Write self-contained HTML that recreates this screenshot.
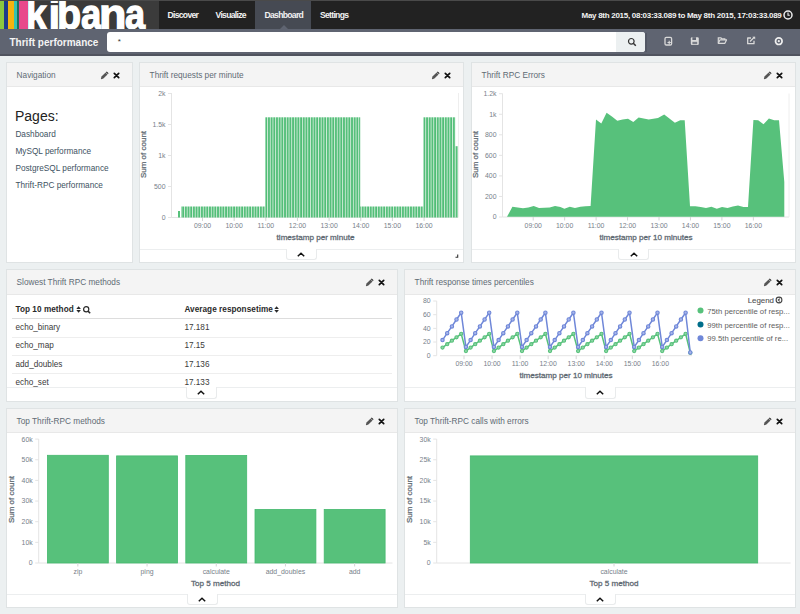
<!DOCTYPE html>
<html><head><meta charset="utf-8"><style>
*{margin:0;padding:0;box-sizing:border-box}
html,body{width:800px;height:614px;overflow:hidden;background:#ecf0f1;font-family:"Liberation Sans", sans-serif;}
.a{position:absolute}
.nav{left:0;top:0;width:800px;height:29px;background:#222;}
.navtxt{color:#f2f2f2;font-weight:bold;font-size:8.6px;letter-spacing:-0.7px;top:11px;line-height:9px;white-space:nowrap}
.sub{left:0;top:29px;width:800px;height:27px;background:#5f6471;border-bottom:2px solid #50545f}
.panel{background:#fff;border:1px solid #dfe3e4;}
.ph{position:absolute;left:0;top:0;right:0;height:24px;background:#f4f4f4;border-bottom:1px solid #e8e8e8}
.pt{position:absolute;left:9.6px;top:7.7px;font-size:8.25px;color:#5f6b75;white-space:nowrap;line-height:10px}
.ico{position:absolute;top:9px}
.exp{position:absolute;left:0;right:0;bottom:0;height:13px;border-top:1px solid #eef0f1}
.tab{position:absolute;bottom:0;width:31px;height:13px;background:#fff;border:1px solid #eceeef;border-top:none;border-radius:0 0 4px 4px;top:-1px}
</style></head><body>
<div class="a nav"></div>
<div class="a" style="left:0;top:0;width:800px;height:1px;background:#4a4a4a"></div>
<div class="a" style="left:0px;top:1px;width:4px;height:28px;background:#8cc63f"></div>
<div class="a" style="left:4px;top:1px;width:3.5px;height:28px;background:#1d3a8a"></div>
<div class="a" style="left:7.5px;top:1px;width:0.5px;height:28px;background:#1a1a3a"></div>
<div class="a" style="left:8px;top:1px;width:5.5px;height:28px;background:#f5b30f"></div>
<div class="a" style="left:13.5px;top:1px;width:3.5px;height:28px;background:#35c3b1"></div>
<div class="a" style="left:17px;top:1px;width:2px;height:28px;background:#1d6e5d"></div>
<div class="a" style="left:19px;top:1px;width:9px;height:28px;background:#e8488b"></div>
<div class="a" style="left:28px;top:1px;width:131px;height:28px;background:#3b3b3b;overflow:hidden"><div class="a" style="left:-2.2px;top:-16.4px;font-size:42px;font-weight:bold;color:#fff;line-height:60px;transform:scaleX(0.89);transform-origin:0 0;-webkit-text-stroke:1.3px #fff;text-shadow:0 0 0.8px #000,0 0 0.8px #000">k</div><div class="a" style="left:20.5px;top:-16.4px;font-size:42px;font-weight:bold;color:#fff;line-height:60px;transform:scaleX(1.0);transform-origin:0 0;-webkit-text-stroke:1.3px #fff;text-shadow:0 0 0.8px #000,0 0 0.8px #000">i</div><div class="a" style="left:28.7px;top:-16.4px;font-size:42px;font-weight:bold;color:#fff;line-height:60px;transform:scaleX(0.94);transform-origin:0 0;-webkit-text-stroke:1.3px #fff;text-shadow:0 0 0.8px #000,0 0 0.8px #000">b</div><div class="a" style="left:53.2px;top:-16.4px;font-size:42px;font-weight:bold;color:#fff;line-height:60px;transform:scaleX(0.87);transform-origin:0 0;-webkit-text-stroke:1.3px #fff;text-shadow:0 0 0.8px #000,0 0 0.8px #000">a</div><div class="a" style="left:71.2px;top:-16.4px;font-size:42px;font-weight:bold;color:#fff;line-height:60px;transform:scaleX(1.07);transform-origin:0 0;-webkit-text-stroke:1.3px #fff;text-shadow:0 0 0.8px #000,0 0 0.8px #000">n</div><div class="a" style="left:97.0px;top:-16.4px;font-size:42px;font-weight:bold;color:#fff;line-height:60px;transform:scaleX(0.86);transform-origin:0 0;-webkit-text-stroke:1.3px #fff;text-shadow:0 0 0.8px #000,0 0 0.8px #000">a</div></div>
<div class="a" style="left:255px;top:1px;width:56px;height:28px;background:#464a53"></div>
<div class="a" style="left:279.5px;top:25px;width:0;height:0;border-left:4px solid transparent;border-right:4px solid transparent;border-bottom:4px solid #5f6471"></div>
<div class="a navtxt" style="left:167.5px">Discover</div>
<div class="a navtxt" style="left:215.5px">Visualize</div>
<div class="a navtxt" style="left:264.5px">Dashboard</div>
<div class="a navtxt" style="left:320px">Settings</div>
<div class="a navtxt" style="left:581.5px;letter-spacing:-0.28px;font-size:8px">May 8th 2015, 08:03:33.089 to May 8th 2015, 17:03:33.089</div>
<svg class="a" style="left:783px;top:9.5px" width="10" height="10" viewBox="0 0 10 10"><circle cx="5" cy="5" r="4" fill="none" stroke="#eee" stroke-width="1.5"/><path d="M5 2.5V5.2H6.8" fill="none" stroke="#eee" stroke-width="1.1"/></svg>
<div class="a sub"></div>
<div class="a" style="left:9.5px;top:37px;font-size:10px;font-weight:bold;color:#f4f4f4;line-height:12px;white-space:nowrap">Thrift performance</div>
<div class="a" style="left:107px;top:32px;width:538px;height:20px;background:#fff;border-radius:3px;overflow:hidden"><div class="a" style="left:509px;top:0;width:29px;height:20px;background:#ecf0f1"></div><div class="a" style="left:10.8px;top:5px;font-size:8px;color:#333;line-height:9px">*</div><svg class="a" style="left:520px;top:5px" width="10" height="10" viewBox="0 0 10 10"><circle cx="4.3" cy="4.3" r="2.8" fill="none" stroke="#333" stroke-width="1.2"/><path d="M6.3 6.3L8.8 8.8" stroke="#333" stroke-width="1.5"/></svg></div>
<div class="a" style="left:645px;top:33px;width:1.5px;height:19px;background:#535865"></div>
<svg class="a" style="left:0;top:0" width="800" height="60" viewBox="0 0 800 60"><rect x="665" y="37.4" width="6.6" height="7.6" rx="1.3" fill="none" stroke="#d9d9d9" stroke-width="1.3"/><path d="M669.2 40.8v3.4M667.5 42.5h3.4" stroke="#d9d9d9" stroke-width="1.1"/><rect x="690.8" y="37.2" width="8" height="7.8" rx="1.2" fill="#d9d9d9"/><rect x="692.4" y="37.2" width="3.6" height="2.8" fill="#5f6471"/><rect x="692.4" y="41.8" width="4.8" height="2.4" fill="#5f6471" opacity="0.8"/><path d="M718.3 43.2v-5.3h2.7l0.8 0.9h3v1.2" fill="none" stroke="#d9d9d9" stroke-width="1.2"/><path d="M718.3 43.3h6.6l1.6-3.4h-6.6z" fill="none" stroke="#d9d9d9" stroke-width="1.2" stroke-linejoin="round"/><path d="M751 38h-3.3v5.7h6.3v-3" fill="none" stroke="#d9d9d9" stroke-width="1.3" stroke-linejoin="round"/><path d="M750 41.5l4.5-4.5" stroke="#d9d9d9" stroke-width="1.3"/><path d="M752.3 36.7h2.9v2.9z" fill="#d9d9d9"/><circle cx="778.8" cy="41.2" r="3.3" fill="none" stroke="#efefef" stroke-width="1.7"/><circle cx="778.8" cy="41.2" r="1.1" fill="#efefef"/></svg>
<div class="a panel" style="left:6px;top:62px;width:127px;height:201px">
<div class="ph" style="height:24px"><div class="pt">Navigation</div><svg class="ico" style="left:93px;top:8px" width="9" height="9" viewBox="0 0 9 9"><path d="M1.4 8.2L0.9 7.7L1.5 5.6L5.6 1.5L7.5 3.4L3.4 7.5z" fill="#555"/><path d="M5.9 1.2L6.7 0.4L8.6 2.3L7.8 3.1z" fill="#222"/></svg><svg class="ico" style="left:106px;top:8.5px" width="7" height="7" viewBox="0 0 7 7"><path d="M1.3 1.3L5.7 5.7M5.7 1.3L1.3 5.7" stroke="#111" stroke-width="1.7" stroke-linecap="round"/></svg></div>
</div>
<div class="a panel" style="left:139px;top:62px;width:325px;height:201px">
<div class="ph" style="height:24px"><div class="pt">Thrift requests per minute</div><svg class="ico" style="left:291px;top:8px" width="9" height="9" viewBox="0 0 9 9"><path d="M1.4 8.2L0.9 7.7L1.5 5.6L5.6 1.5L7.5 3.4L3.4 7.5z" fill="#555"/><path d="M5.9 1.2L6.7 0.4L8.6 2.3L7.8 3.1z" fill="#222"/></svg><svg class="ico" style="left:304px;top:8.5px" width="7" height="7" viewBox="0 0 7 7"><path d="M1.3 1.3L5.7 5.7M5.7 1.3L1.3 5.7" stroke="#111" stroke-width="1.7" stroke-linecap="round"/></svg></div>
</div>
<div class="a panel" style="left:471px;top:62px;width:325px;height:201px">
<div class="ph" style="height:24px"><div class="pt">Thrift RPC Errors</div><svg class="ico" style="left:291px;top:8px" width="9" height="9" viewBox="0 0 9 9"><path d="M1.4 8.2L0.9 7.7L1.5 5.6L5.6 1.5L7.5 3.4L3.4 7.5z" fill="#555"/><path d="M5.9 1.2L6.7 0.4L8.6 2.3L7.8 3.1z" fill="#222"/></svg><svg class="ico" style="left:304px;top:8.5px" width="7" height="7" viewBox="0 0 7 7"><path d="M1.3 1.3L5.7 5.7M5.7 1.3L1.3 5.7" stroke="#111" stroke-width="1.7" stroke-linecap="round"/></svg></div>
</div>
<div class="a panel" style="left:6px;top:269px;width:392px;height:133px">
<div class="ph" style="height:25px"><div class="pt">Slowest Thrift RPC methods</div><svg class="ico" style="left:358px;top:8px" width="9" height="9" viewBox="0 0 9 9"><path d="M1.4 8.2L0.9 7.7L1.5 5.6L5.6 1.5L7.5 3.4L3.4 7.5z" fill="#555"/><path d="M5.9 1.2L6.7 0.4L8.6 2.3L7.8 3.1z" fill="#222"/></svg><svg class="ico" style="left:371px;top:8.5px" width="7" height="7" viewBox="0 0 7 7"><path d="M1.3 1.3L5.7 5.7M5.7 1.3L1.3 5.7" stroke="#111" stroke-width="1.7" stroke-linecap="round"/></svg></div>
</div>
<div class="a panel" style="left:404px;top:269px;width:392px;height:133px">
<div class="ph" style="height:25px"><div class="pt">Thrift response times percentiles</div><svg class="ico" style="left:358px;top:8px" width="9" height="9" viewBox="0 0 9 9"><path d="M1.4 8.2L0.9 7.7L1.5 5.6L5.6 1.5L7.5 3.4L3.4 7.5z" fill="#555"/><path d="M5.9 1.2L6.7 0.4L8.6 2.3L7.8 3.1z" fill="#222"/></svg><svg class="ico" style="left:371px;top:8.5px" width="7" height="7" viewBox="0 0 7 7"><path d="M1.3 1.3L5.7 5.7M5.7 1.3L1.3 5.7" stroke="#111" stroke-width="1.7" stroke-linecap="round"/></svg></div>
</div>
<div class="a panel" style="left:6px;top:408px;width:392px;height:200px">
<div class="ph" style="height:24px"><div class="pt">Top Thrift-RPC methods</div><svg class="ico" style="left:358px;top:8px" width="9" height="9" viewBox="0 0 9 9"><path d="M1.4 8.2L0.9 7.7L1.5 5.6L5.6 1.5L7.5 3.4L3.4 7.5z" fill="#555"/><path d="M5.9 1.2L6.7 0.4L8.6 2.3L7.8 3.1z" fill="#222"/></svg><svg class="ico" style="left:371px;top:8.5px" width="7" height="7" viewBox="0 0 7 7"><path d="M1.3 1.3L5.7 5.7M5.7 1.3L1.3 5.7" stroke="#111" stroke-width="1.7" stroke-linecap="round"/></svg></div>
</div>
<div class="a panel" style="left:404px;top:408px;width:392px;height:200px">
<div class="ph" style="height:24px"><div class="pt">Top Thrift-RPC calls with errors</div><svg class="ico" style="left:358px;top:8px" width="9" height="9" viewBox="0 0 9 9"><path d="M1.4 8.2L0.9 7.7L1.5 5.6L5.6 1.5L7.5 3.4L3.4 7.5z" fill="#555"/><path d="M5.9 1.2L6.7 0.4L8.6 2.3L7.8 3.1z" fill="#222"/></svg><svg class="ico" style="left:371px;top:8.5px" width="7" height="7" viewBox="0 0 7 7"><path d="M1.3 1.3L5.7 5.7M5.7 1.3L1.3 5.7" stroke="#111" stroke-width="1.7" stroke-linecap="round"/></svg></div>
</div>
<div class="a" style="left:15px;top:107.5px;font-size:14px;color:#222;line-height:16px">Pages:</div>
<div class="a" style="left:15.4px;top:129.8px;font-size:8.25px;color:#405262;line-height:10px;white-space:nowrap">Dashboard</div>
<div class="a" style="left:15.4px;top:146.85000000000002px;font-size:8.25px;color:#405262;line-height:10px;white-space:nowrap">MySQL performance</div>
<div class="a" style="left:15.4px;top:163.9px;font-size:8.25px;color:#405262;line-height:10px;white-space:nowrap">PostgreSQL performance</div>
<div class="a" style="left:15.4px;top:180.95000000000002px;font-size:8.25px;color:#405262;line-height:10px;white-space:nowrap">Thrift-RPC performance</div>
<div class="a" style="left:15.5px;top:304.9px;font-size:8.2px;font-weight:bold;color:#2a2a2a;letter-spacing:0.05px;line-height:10px;white-space:nowrap">Top 10 method</div>
<svg class="a" style="left:75.5px;top:305.5px" width="16" height="8" viewBox="0 0 16 8"><path d="M0.3 2.9L2.6 0.2L4.9 2.9zM0.3 4.1L2.6 6.8L4.9 4.1z" fill="#2a2a2a"/><circle cx="10.2" cy="3.3" r="2.6" fill="none" stroke="#2a2a2a" stroke-width="1.2"/><path d="M12 5.1L14.2 7.3" stroke="#2a2a2a" stroke-width="1.5"/></svg>
<div class="a" style="left:184.4px;top:304.9px;font-size:8.2px;font-weight:bold;color:#2a2a2a;letter-spacing:0.05px;line-height:10px;white-space:nowrap">Average responsetime</div>
<svg class="a" style="left:274px;top:305.5px" width="6" height="8" viewBox="0 0 6 8"><path d="M0.3 2.9L2.6 0.2L4.9 2.9zM0.3 4.1L2.6 6.8L4.9 4.1z" fill="#2a2a2a"/></svg>
<div class="a" style="left:12px;top:317.5px;width:380px;height:1.5px;background:#ddd"></div>
<div class="a" style="left:15.5px;top:323.1px;font-size:8.2px;color:#3a3a3a;line-height:10px">echo_binary</div>
<div class="a" style="left:184.4px;top:323.1px;font-size:8.2px;color:#3a3a3a;line-height:10px">17.181</div>
<div class="a" style="left:12px;top:337.0px;width:380px;height:1px;background:#eee"></div>
<div class="a" style="left:15.5px;top:341.3px;font-size:8.2px;color:#3a3a3a;line-height:10px">echo_map</div>
<div class="a" style="left:184.4px;top:341.3px;font-size:8.2px;color:#3a3a3a;line-height:10px">17.15</div>
<div class="a" style="left:12px;top:355.2px;width:380px;height:1px;background:#eee"></div>
<div class="a" style="left:15.5px;top:359.5px;font-size:8.2px;color:#3a3a3a;line-height:10px">add_doubles</div>
<div class="a" style="left:184.4px;top:359.5px;font-size:8.2px;color:#3a3a3a;line-height:10px">17.136</div>
<div class="a" style="left:12px;top:373.4px;width:380px;height:1px;background:#eee"></div>
<div class="a" style="left:15.5px;top:377.70000000000005px;font-size:8.2px;color:#3a3a3a;line-height:10px">echo_set</div>
<div class="a" style="left:184.4px;top:377.70000000000005px;font-size:8.2px;color:#3a3a3a;line-height:10px">17.133</div>
<svg class="a" style="left:0;top:0" width="800" height="614" viewBox="0 0 800 614" font-family="Liberation Sans, sans-serif"><defs><pattern id="bp" x="0" y="0" width="2.68" height="10" patternUnits="userSpaceOnUse"><rect x="0" y="0" width="2.68" height="10" fill="#8fd3a5"/><rect x="0.3" y="0" width="1.3" height="10" fill="#3fb86a"/><rect x="2.0" y="0" width="0.68" height="10" fill="#e3f5e9"/></pattern></defs><line x1="171.5" y1="93" x2="171.5" y2="217.5" stroke="#e4e4e4"/><line x1="171.5" y1="217.5" x2="458" y2="217.5" stroke="#e4e4e4"/><line x1="458.5" y1="93" x2="458.5" y2="217.5" stroke="#eee"/><line x1="168.0" y1="217.5" x2="171.5" y2="217.5" stroke="#e4e4e4" stroke-width="1"/><text x="165.5" y="219.9" text-anchor="end" font-size="6.9" fill="#77818a">0</text><line x1="168.0" y1="186.5" x2="171.5" y2="186.5" stroke="#e4e4e4" stroke-width="1"/><text x="165.5" y="188.9" text-anchor="end" font-size="6.9" fill="#77818a">500</text><line x1="168.0" y1="155.5" x2="171.5" y2="155.5" stroke="#e4e4e4" stroke-width="1"/><text x="165.5" y="157.9" text-anchor="end" font-size="6.9" fill="#77818a">1k</text><line x1="168.0" y1="124.5" x2="171.5" y2="124.5" stroke="#e4e4e4" stroke-width="1"/><text x="165.5" y="126.9" text-anchor="end" font-size="6.9" fill="#77818a">1.5k</text><line x1="168.0" y1="93.5" x2="171.5" y2="93.5" stroke="#e4e4e4" stroke-width="1"/><text x="165.5" y="95.9" text-anchor="end" font-size="6.9" fill="#77818a">2k</text><line x1="202.5" y1="217.5" x2="202.5" y2="221.0" stroke="#d4d4d4" stroke-width="1"/><text x="202.5" y="227.7" text-anchor="middle" font-size="6.9" fill="#77818a">09:00</text><line x1="234.15" y1="217.5" x2="234.15" y2="221.0" stroke="#d4d4d4" stroke-width="1"/><text x="234.15" y="227.7" text-anchor="middle" font-size="6.9" fill="#77818a">10:00</text><line x1="265.8" y1="217.5" x2="265.8" y2="221.0" stroke="#d4d4d4" stroke-width="1"/><text x="265.8" y="227.7" text-anchor="middle" font-size="6.9" fill="#77818a">11:00</text><line x1="297.45" y1="217.5" x2="297.45" y2="221.0" stroke="#d4d4d4" stroke-width="1"/><text x="297.45" y="227.7" text-anchor="middle" font-size="6.9" fill="#77818a">12:00</text><line x1="329.1" y1="217.5" x2="329.1" y2="221.0" stroke="#d4d4d4" stroke-width="1"/><text x="329.1" y="227.7" text-anchor="middle" font-size="6.9" fill="#77818a">13:00</text><line x1="360.75" y1="217.5" x2="360.75" y2="221.0" stroke="#d4d4d4" stroke-width="1"/><text x="360.75" y="227.7" text-anchor="middle" font-size="6.9" fill="#77818a">14:00</text><line x1="392.4" y1="217.5" x2="392.4" y2="221.0" stroke="#d4d4d4" stroke-width="1"/><text x="392.4" y="227.7" text-anchor="middle" font-size="6.9" fill="#77818a">15:00</text><line x1="424.04999999999995" y1="217.5" x2="424.04999999999995" y2="221.0" stroke="#d4d4d4" stroke-width="1"/><text x="424.04999999999995" y="227.7" text-anchor="middle" font-size="6.9" fill="#77818a">16:00</text><text x="0" y="0" transform="translate(146.2,154.5) rotate(-90)" text-anchor="middle" font-size="8" fill="#5f6a73" stroke="#5f6a73" stroke-width="0.25">Sum of count</text><text x="315.5" y="239.5" text-anchor="middle" font-size="8.1" fill="#5f6a73" stroke="#5f6a73" stroke-width="0.3">timestamp per minute</text><rect x="178" y="211" width="2" height="6.5" fill="#57c17b"/><rect x="181" y="206.5" width="84.2" height="11.0" fill="url(#bp)"/><rect x="265.2" y="117.3" width="95" height="100.2" fill="url(#bp)"/><rect x="360.2" y="206.5" width="63.1" height="11.0" fill="url(#bp)"/><rect x="423.3" y="117.3" width="31.9" height="100.2" fill="url(#bp)"/><rect x="455.6" y="146.2" width="2" height="71.30000000000001" fill="#57c17b"/><line x1="502.5" y1="93.5" x2="502.5" y2="217" stroke="#e4e4e4"/><line x1="502.5" y1="217" x2="789" y2="217" stroke="#e4e4e4"/><line x1="789" y1="93.5" x2="789" y2="217" stroke="#eee"/><line x1="499.0" y1="217.0" x2="502.5" y2="217.0" stroke="#e4e4e4" stroke-width="1"/><text x="496.5" y="219.4" text-anchor="end" font-size="6.9" fill="#77818a">0</text><line x1="499.0" y1="196.45" x2="502.5" y2="196.45" stroke="#e4e4e4" stroke-width="1"/><text x="496.5" y="198.85" text-anchor="end" font-size="6.9" fill="#77818a">200</text><line x1="499.0" y1="175.9" x2="502.5" y2="175.9" stroke="#e4e4e4" stroke-width="1"/><text x="496.5" y="178.3" text-anchor="end" font-size="6.9" fill="#77818a">400</text><line x1="499.0" y1="155.35" x2="502.5" y2="155.35" stroke="#e4e4e4" stroke-width="1"/><text x="496.5" y="157.75" text-anchor="end" font-size="6.9" fill="#77818a">600</text><line x1="499.0" y1="134.8" x2="502.5" y2="134.8" stroke="#e4e4e4" stroke-width="1"/><text x="496.5" y="137.20000000000002" text-anchor="end" font-size="6.9" fill="#77818a">800</text><line x1="499.0" y1="114.25" x2="502.5" y2="114.25" stroke="#e4e4e4" stroke-width="1"/><text x="496.5" y="116.65" text-anchor="end" font-size="6.9" fill="#77818a">1k</text><line x1="499.0" y1="93.69999999999999" x2="502.5" y2="93.69999999999999" stroke="#e4e4e4" stroke-width="1"/><text x="496.5" y="96.1" text-anchor="end" font-size="6.9" fill="#77818a">1.2k</text><line x1="533.2" y1="217" x2="533.2" y2="220.5" stroke="#d4d4d4" stroke-width="1"/><text x="533.2" y="228.2" text-anchor="middle" font-size="6.9" fill="#77818a">09:00</text><line x1="564.6500000000001" y1="217" x2="564.6500000000001" y2="220.5" stroke="#d4d4d4" stroke-width="1"/><text x="564.6500000000001" y="228.2" text-anchor="middle" font-size="6.9" fill="#77818a">10:00</text><line x1="596.1" y1="217" x2="596.1" y2="220.5" stroke="#d4d4d4" stroke-width="1"/><text x="596.1" y="228.2" text-anchor="middle" font-size="6.9" fill="#77818a">11:00</text><line x1="627.5500000000001" y1="217" x2="627.5500000000001" y2="220.5" stroke="#d4d4d4" stroke-width="1"/><text x="627.5500000000001" y="228.2" text-anchor="middle" font-size="6.9" fill="#77818a">12:00</text><line x1="659.0" y1="217" x2="659.0" y2="220.5" stroke="#d4d4d4" stroke-width="1"/><text x="659.0" y="228.2" text-anchor="middle" font-size="6.9" fill="#77818a">13:00</text><line x1="690.45" y1="217" x2="690.45" y2="220.5" stroke="#d4d4d4" stroke-width="1"/><text x="690.45" y="228.2" text-anchor="middle" font-size="6.9" fill="#77818a">14:00</text><line x1="721.9000000000001" y1="217" x2="721.9000000000001" y2="220.5" stroke="#d4d4d4" stroke-width="1"/><text x="721.9000000000001" y="228.2" text-anchor="middle" font-size="6.9" fill="#77818a">15:00</text><line x1="753.35" y1="217" x2="753.35" y2="220.5" stroke="#d4d4d4" stroke-width="1"/><text x="753.35" y="228.2" text-anchor="middle" font-size="6.9" fill="#77818a">16:00</text><text x="0" y="0" transform="translate(477.6,154.5) rotate(-90)" text-anchor="middle" font-size="8" fill="#5f6a73" stroke="#5f6a73" stroke-width="0.25">Sum of count</text><text x="646" y="239.5" text-anchor="middle" font-size="8.1" fill="#5f6a73" stroke="#5f6a73" stroke-width="0.3">timestamp per 10 minutes</text><polygon points="507,216.8 512.4,206.7 517.7,207.5 523,208.3 528.4,207.5 533.7,206.1 539,208 544.3,207.8 549.7,207.5 555,206.1 560.4,207 564.4,208.8 569.8,206.7 575,208 580.4,206.7 585.5,206.3 590.6,206.1 596,119.4 601.3,123.4 606.6,112.7 611.9,116.5 617.3,120.7 622.6,119.5 628,118.8 633.3,122 638.6,117.5 648.7,119.4 658,118 664.2,114.6 674.9,122.8 680.2,120.2 684.7,120.2 690,206.2 695.4,206.2 700.7,207 706,208 711.4,206.7 716.8,208.8 722,207 727.5,208 732.8,206.5 738,205.4 743.5,207 748,207 753.4,119.9 758.2,120.2 763.5,124.2 768.9,118.6 774.2,120.2 779,120.2 784.3,182 784.3,216.8" fill="#57c17b"/><line x1="436.7" y1="301" x2="436.7" y2="355.7" stroke="#e4e4e4"/><line x1="440" y1="355.7" x2="692" y2="355.7" stroke="#e4e4e4"/><line x1="433.2" y1="355.7" x2="436.7" y2="355.7" stroke="#e4e4e4" stroke-width="1"/><text x="430.7" y="358.09999999999997" text-anchor="end" font-size="6.9" fill="#77818a">0</text><line x1="433.2" y1="342.03" x2="436.7" y2="342.03" stroke="#e4e4e4" stroke-width="1"/><text x="430.7" y="344.42999999999995" text-anchor="end" font-size="6.9" fill="#77818a">20</text><line x1="433.2" y1="328.36" x2="436.7" y2="328.36" stroke="#e4e4e4" stroke-width="1"/><text x="430.7" y="330.76" text-anchor="end" font-size="6.9" fill="#77818a">40</text><line x1="433.2" y1="314.69" x2="436.7" y2="314.69" stroke="#e4e4e4" stroke-width="1"/><text x="430.7" y="317.09" text-anchor="end" font-size="6.9" fill="#77818a">60</text><line x1="433.2" y1="301.02" x2="436.7" y2="301.02" stroke="#e4e4e4" stroke-width="1"/><text x="430.7" y="303.41999999999996" text-anchor="end" font-size="6.9" fill="#77818a">80</text><line x1="464.0" y1="355.7" x2="464.0" y2="359.2" stroke="#d4d4d4" stroke-width="1"/><text x="464.0" y="365.9" text-anchor="middle" font-size="6.9" fill="#77818a">09:00</text><line x1="492.05" y1="355.7" x2="492.05" y2="359.2" stroke="#d4d4d4" stroke-width="1"/><text x="492.05" y="365.9" text-anchor="middle" font-size="6.9" fill="#77818a">10:00</text><line x1="520.1" y1="355.7" x2="520.1" y2="359.2" stroke="#d4d4d4" stroke-width="1"/><text x="520.1" y="365.9" text-anchor="middle" font-size="6.9" fill="#77818a">11:00</text><line x1="548.15" y1="355.7" x2="548.15" y2="359.2" stroke="#d4d4d4" stroke-width="1"/><text x="548.15" y="365.9" text-anchor="middle" font-size="6.9" fill="#77818a">12:00</text><line x1="576.2" y1="355.7" x2="576.2" y2="359.2" stroke="#d4d4d4" stroke-width="1"/><text x="576.2" y="365.9" text-anchor="middle" font-size="6.9" fill="#77818a">13:00</text><line x1="604.25" y1="355.7" x2="604.25" y2="359.2" stroke="#d4d4d4" stroke-width="1"/><text x="604.25" y="365.9" text-anchor="middle" font-size="6.9" fill="#77818a">14:00</text><line x1="632.3" y1="355.7" x2="632.3" y2="359.2" stroke="#d4d4d4" stroke-width="1"/><text x="632.3" y="365.9" text-anchor="middle" font-size="6.9" fill="#77818a">15:00</text><line x1="660.35" y1="355.7" x2="660.35" y2="359.2" stroke="#d4d4d4" stroke-width="1"/><text x="660.35" y="365.9" text-anchor="middle" font-size="6.9" fill="#77818a">16:00</text><text x="566" y="377.5" text-anchor="middle" font-size="8.1" fill="#5f6a73" stroke="#5f6a73" stroke-width="0.3">timestamp per 10 minutes</text><polyline points="442.5,347.6 447.2,344.2 451.9,340.7 456.5,337.3 461.2,333.8 465.9,351.1 470.6,347.6 475.2,344.2 479.9,340.7 484.6,337.3 489.2,333.8 493.9,351.1 498.6,347.6 503.3,344.2 507.9,340.7 512.6,337.3 517.3,333.8 522.0,351.1 526.6,347.6 531.3,344.2 536.0,340.7 540.7,337.3 545.4,333.8 550.0,351.1 554.7,347.6 559.4,344.2 564.0,340.7 568.7,337.3 573.4,333.8 578.1,351.1 582.8,347.6 587.4,344.2 592.1,340.7 596.8,337.3 601.5,333.8 606.1,351.1 610.8,347.6 615.5,344.2 620.1,340.7 624.8,337.3 629.5,333.8 634.2,351.1 638.9,347.6 643.5,344.2 648.2,340.7 652.9,337.3 657.5,333.8 662.2,351.1 666.9,347.6 671.6,344.2 676.2,340.7 680.9,337.3 685.6,333.8 690.3,352.8" fill="none" stroke="#57c17b" stroke-width="1.5"/><circle cx="442.5" cy="347.6" r="1.6" fill="#8fd6a6" stroke="#57c17b" stroke-width="1.1"/><circle cx="447.2" cy="344.2" r="1.6" fill="#8fd6a6" stroke="#57c17b" stroke-width="1.1"/><circle cx="451.9" cy="340.7" r="1.6" fill="#8fd6a6" stroke="#57c17b" stroke-width="1.1"/><circle cx="456.5" cy="337.3" r="1.6" fill="#8fd6a6" stroke="#57c17b" stroke-width="1.1"/><circle cx="461.2" cy="333.8" r="1.6" fill="#8fd6a6" stroke="#57c17b" stroke-width="1.1"/><circle cx="465.9" cy="351.1" r="1.6" fill="#8fd6a6" stroke="#57c17b" stroke-width="1.1"/><circle cx="470.6" cy="347.6" r="1.6" fill="#8fd6a6" stroke="#57c17b" stroke-width="1.1"/><circle cx="475.2" cy="344.2" r="1.6" fill="#8fd6a6" stroke="#57c17b" stroke-width="1.1"/><circle cx="479.9" cy="340.7" r="1.6" fill="#8fd6a6" stroke="#57c17b" stroke-width="1.1"/><circle cx="484.6" cy="337.3" r="1.6" fill="#8fd6a6" stroke="#57c17b" stroke-width="1.1"/><circle cx="489.2" cy="333.8" r="1.6" fill="#8fd6a6" stroke="#57c17b" stroke-width="1.1"/><circle cx="493.9" cy="351.1" r="1.6" fill="#8fd6a6" stroke="#57c17b" stroke-width="1.1"/><circle cx="498.6" cy="347.6" r="1.6" fill="#8fd6a6" stroke="#57c17b" stroke-width="1.1"/><circle cx="503.3" cy="344.2" r="1.6" fill="#8fd6a6" stroke="#57c17b" stroke-width="1.1"/><circle cx="507.9" cy="340.7" r="1.6" fill="#8fd6a6" stroke="#57c17b" stroke-width="1.1"/><circle cx="512.6" cy="337.3" r="1.6" fill="#8fd6a6" stroke="#57c17b" stroke-width="1.1"/><circle cx="517.3" cy="333.8" r="1.6" fill="#8fd6a6" stroke="#57c17b" stroke-width="1.1"/><circle cx="522.0" cy="351.1" r="1.6" fill="#8fd6a6" stroke="#57c17b" stroke-width="1.1"/><circle cx="526.6" cy="347.6" r="1.6" fill="#8fd6a6" stroke="#57c17b" stroke-width="1.1"/><circle cx="531.3" cy="344.2" r="1.6" fill="#8fd6a6" stroke="#57c17b" stroke-width="1.1"/><circle cx="536.0" cy="340.7" r="1.6" fill="#8fd6a6" stroke="#57c17b" stroke-width="1.1"/><circle cx="540.7" cy="337.3" r="1.6" fill="#8fd6a6" stroke="#57c17b" stroke-width="1.1"/><circle cx="545.4" cy="333.8" r="1.6" fill="#8fd6a6" stroke="#57c17b" stroke-width="1.1"/><circle cx="550.0" cy="351.1" r="1.6" fill="#8fd6a6" stroke="#57c17b" stroke-width="1.1"/><circle cx="554.7" cy="347.6" r="1.6" fill="#8fd6a6" stroke="#57c17b" stroke-width="1.1"/><circle cx="559.4" cy="344.2" r="1.6" fill="#8fd6a6" stroke="#57c17b" stroke-width="1.1"/><circle cx="564.0" cy="340.7" r="1.6" fill="#8fd6a6" stroke="#57c17b" stroke-width="1.1"/><circle cx="568.7" cy="337.3" r="1.6" fill="#8fd6a6" stroke="#57c17b" stroke-width="1.1"/><circle cx="573.4" cy="333.8" r="1.6" fill="#8fd6a6" stroke="#57c17b" stroke-width="1.1"/><circle cx="578.1" cy="351.1" r="1.6" fill="#8fd6a6" stroke="#57c17b" stroke-width="1.1"/><circle cx="582.8" cy="347.6" r="1.6" fill="#8fd6a6" stroke="#57c17b" stroke-width="1.1"/><circle cx="587.4" cy="344.2" r="1.6" fill="#8fd6a6" stroke="#57c17b" stroke-width="1.1"/><circle cx="592.1" cy="340.7" r="1.6" fill="#8fd6a6" stroke="#57c17b" stroke-width="1.1"/><circle cx="596.8" cy="337.3" r="1.6" fill="#8fd6a6" stroke="#57c17b" stroke-width="1.1"/><circle cx="601.5" cy="333.8" r="1.6" fill="#8fd6a6" stroke="#57c17b" stroke-width="1.1"/><circle cx="606.1" cy="351.1" r="1.6" fill="#8fd6a6" stroke="#57c17b" stroke-width="1.1"/><circle cx="610.8" cy="347.6" r="1.6" fill="#8fd6a6" stroke="#57c17b" stroke-width="1.1"/><circle cx="615.5" cy="344.2" r="1.6" fill="#8fd6a6" stroke="#57c17b" stroke-width="1.1"/><circle cx="620.1" cy="340.7" r="1.6" fill="#8fd6a6" stroke="#57c17b" stroke-width="1.1"/><circle cx="624.8" cy="337.3" r="1.6" fill="#8fd6a6" stroke="#57c17b" stroke-width="1.1"/><circle cx="629.5" cy="333.8" r="1.6" fill="#8fd6a6" stroke="#57c17b" stroke-width="1.1"/><circle cx="634.2" cy="351.1" r="1.6" fill="#8fd6a6" stroke="#57c17b" stroke-width="1.1"/><circle cx="638.9" cy="347.6" r="1.6" fill="#8fd6a6" stroke="#57c17b" stroke-width="1.1"/><circle cx="643.5" cy="344.2" r="1.6" fill="#8fd6a6" stroke="#57c17b" stroke-width="1.1"/><circle cx="648.2" cy="340.7" r="1.6" fill="#8fd6a6" stroke="#57c17b" stroke-width="1.1"/><circle cx="652.9" cy="337.3" r="1.6" fill="#8fd6a6" stroke="#57c17b" stroke-width="1.1"/><circle cx="657.5" cy="333.8" r="1.6" fill="#8fd6a6" stroke="#57c17b" stroke-width="1.1"/><circle cx="662.2" cy="351.1" r="1.6" fill="#8fd6a6" stroke="#57c17b" stroke-width="1.1"/><circle cx="666.9" cy="347.6" r="1.6" fill="#8fd6a6" stroke="#57c17b" stroke-width="1.1"/><circle cx="671.6" cy="344.2" r="1.6" fill="#8fd6a6" stroke="#57c17b" stroke-width="1.1"/><circle cx="676.2" cy="340.7" r="1.6" fill="#8fd6a6" stroke="#57c17b" stroke-width="1.1"/><circle cx="680.9" cy="337.3" r="1.6" fill="#8fd6a6" stroke="#57c17b" stroke-width="1.1"/><circle cx="685.6" cy="333.8" r="1.6" fill="#8fd6a6" stroke="#57c17b" stroke-width="1.1"/><circle cx="690.3" cy="352.8" r="1.6" fill="#8fd6a6" stroke="#57c17b" stroke-width="1.1"/><polyline points="442.5,340.1 447.2,333.2 451.9,326.4 456.5,319.5 461.2,312.7 465.9,346.9 470.6,340.1 475.2,333.2 479.9,326.4 484.6,319.5 489.2,312.7 493.9,346.9 498.6,340.1 503.3,333.2 507.9,326.4 512.6,319.5 517.3,312.7 522.0,346.9 526.6,340.1 531.3,333.2 536.0,326.4 540.7,319.5 545.4,312.7 550.0,346.9 554.7,340.1 559.4,333.2 564.0,326.4 568.7,319.5 573.4,312.7 578.1,346.9 582.8,340.1 587.4,333.2 592.1,326.4 596.8,319.5 601.5,312.7 606.1,346.9 610.8,340.1 615.5,333.2 620.1,326.4 624.8,319.5 629.5,312.7 634.2,346.9 638.9,340.1 643.5,333.2 648.2,326.4 652.9,319.5 657.5,312.7 662.2,346.9 666.9,340.1 671.6,333.2 676.2,326.4 680.9,319.5 685.6,312.7 690.3,352.5" fill="none" stroke="#6f87d8" stroke-width="1.5"/><circle cx="442.5" cy="340.1" r="1.7" fill="#a9b7ea" stroke="#6f87d8" stroke-width="1.1"/><circle cx="447.2" cy="333.2" r="1.7" fill="#a9b7ea" stroke="#6f87d8" stroke-width="1.1"/><circle cx="451.9" cy="326.4" r="1.7" fill="#a9b7ea" stroke="#6f87d8" stroke-width="1.1"/><circle cx="456.5" cy="319.5" r="1.7" fill="#a9b7ea" stroke="#6f87d8" stroke-width="1.1"/><circle cx="461.2" cy="312.7" r="1.7" fill="#a9b7ea" stroke="#6f87d8" stroke-width="1.1"/><circle cx="465.9" cy="346.9" r="1.7" fill="#a9b7ea" stroke="#6f87d8" stroke-width="1.1"/><circle cx="470.6" cy="340.1" r="1.7" fill="#a9b7ea" stroke="#6f87d8" stroke-width="1.1"/><circle cx="475.2" cy="333.2" r="1.7" fill="#a9b7ea" stroke="#6f87d8" stroke-width="1.1"/><circle cx="479.9" cy="326.4" r="1.7" fill="#a9b7ea" stroke="#6f87d8" stroke-width="1.1"/><circle cx="484.6" cy="319.5" r="1.7" fill="#a9b7ea" stroke="#6f87d8" stroke-width="1.1"/><circle cx="489.2" cy="312.7" r="1.7" fill="#a9b7ea" stroke="#6f87d8" stroke-width="1.1"/><circle cx="493.9" cy="346.9" r="1.7" fill="#a9b7ea" stroke="#6f87d8" stroke-width="1.1"/><circle cx="498.6" cy="340.1" r="1.7" fill="#a9b7ea" stroke="#6f87d8" stroke-width="1.1"/><circle cx="503.3" cy="333.2" r="1.7" fill="#a9b7ea" stroke="#6f87d8" stroke-width="1.1"/><circle cx="507.9" cy="326.4" r="1.7" fill="#a9b7ea" stroke="#6f87d8" stroke-width="1.1"/><circle cx="512.6" cy="319.5" r="1.7" fill="#a9b7ea" stroke="#6f87d8" stroke-width="1.1"/><circle cx="517.3" cy="312.7" r="1.7" fill="#a9b7ea" stroke="#6f87d8" stroke-width="1.1"/><circle cx="522.0" cy="346.9" r="1.7" fill="#a9b7ea" stroke="#6f87d8" stroke-width="1.1"/><circle cx="526.6" cy="340.1" r="1.7" fill="#a9b7ea" stroke="#6f87d8" stroke-width="1.1"/><circle cx="531.3" cy="333.2" r="1.7" fill="#a9b7ea" stroke="#6f87d8" stroke-width="1.1"/><circle cx="536.0" cy="326.4" r="1.7" fill="#a9b7ea" stroke="#6f87d8" stroke-width="1.1"/><circle cx="540.7" cy="319.5" r="1.7" fill="#a9b7ea" stroke="#6f87d8" stroke-width="1.1"/><circle cx="545.4" cy="312.7" r="1.7" fill="#a9b7ea" stroke="#6f87d8" stroke-width="1.1"/><circle cx="550.0" cy="346.9" r="1.7" fill="#a9b7ea" stroke="#6f87d8" stroke-width="1.1"/><circle cx="554.7" cy="340.1" r="1.7" fill="#a9b7ea" stroke="#6f87d8" stroke-width="1.1"/><circle cx="559.4" cy="333.2" r="1.7" fill="#a9b7ea" stroke="#6f87d8" stroke-width="1.1"/><circle cx="564.0" cy="326.4" r="1.7" fill="#a9b7ea" stroke="#6f87d8" stroke-width="1.1"/><circle cx="568.7" cy="319.5" r="1.7" fill="#a9b7ea" stroke="#6f87d8" stroke-width="1.1"/><circle cx="573.4" cy="312.7" r="1.7" fill="#a9b7ea" stroke="#6f87d8" stroke-width="1.1"/><circle cx="578.1" cy="346.9" r="1.7" fill="#a9b7ea" stroke="#6f87d8" stroke-width="1.1"/><circle cx="582.8" cy="340.1" r="1.7" fill="#a9b7ea" stroke="#6f87d8" stroke-width="1.1"/><circle cx="587.4" cy="333.2" r="1.7" fill="#a9b7ea" stroke="#6f87d8" stroke-width="1.1"/><circle cx="592.1" cy="326.4" r="1.7" fill="#a9b7ea" stroke="#6f87d8" stroke-width="1.1"/><circle cx="596.8" cy="319.5" r="1.7" fill="#a9b7ea" stroke="#6f87d8" stroke-width="1.1"/><circle cx="601.5" cy="312.7" r="1.7" fill="#a9b7ea" stroke="#6f87d8" stroke-width="1.1"/><circle cx="606.1" cy="346.9" r="1.7" fill="#a9b7ea" stroke="#6f87d8" stroke-width="1.1"/><circle cx="610.8" cy="340.1" r="1.7" fill="#a9b7ea" stroke="#6f87d8" stroke-width="1.1"/><circle cx="615.5" cy="333.2" r="1.7" fill="#a9b7ea" stroke="#6f87d8" stroke-width="1.1"/><circle cx="620.1" cy="326.4" r="1.7" fill="#a9b7ea" stroke="#6f87d8" stroke-width="1.1"/><circle cx="624.8" cy="319.5" r="1.7" fill="#a9b7ea" stroke="#6f87d8" stroke-width="1.1"/><circle cx="629.5" cy="312.7" r="1.7" fill="#a9b7ea" stroke="#6f87d8" stroke-width="1.1"/><circle cx="634.2" cy="346.9" r="1.7" fill="#a9b7ea" stroke="#6f87d8" stroke-width="1.1"/><circle cx="638.9" cy="340.1" r="1.7" fill="#a9b7ea" stroke="#6f87d8" stroke-width="1.1"/><circle cx="643.5" cy="333.2" r="1.7" fill="#a9b7ea" stroke="#6f87d8" stroke-width="1.1"/><circle cx="648.2" cy="326.4" r="1.7" fill="#a9b7ea" stroke="#6f87d8" stroke-width="1.1"/><circle cx="652.9" cy="319.5" r="1.7" fill="#a9b7ea" stroke="#6f87d8" stroke-width="1.1"/><circle cx="657.5" cy="312.7" r="1.7" fill="#a9b7ea" stroke="#6f87d8" stroke-width="1.1"/><circle cx="662.2" cy="346.9" r="1.7" fill="#a9b7ea" stroke="#6f87d8" stroke-width="1.1"/><circle cx="666.9" cy="340.1" r="1.7" fill="#a9b7ea" stroke="#6f87d8" stroke-width="1.1"/><circle cx="671.6" cy="333.2" r="1.7" fill="#a9b7ea" stroke="#6f87d8" stroke-width="1.1"/><circle cx="676.2" cy="326.4" r="1.7" fill="#a9b7ea" stroke="#6f87d8" stroke-width="1.1"/><circle cx="680.9" cy="319.5" r="1.7" fill="#a9b7ea" stroke="#6f87d8" stroke-width="1.1"/><circle cx="685.6" cy="312.7" r="1.7" fill="#a9b7ea" stroke="#6f87d8" stroke-width="1.1"/><circle cx="690.3" cy="352.5" r="1.7" fill="#a9b7ea" stroke="#6f87d8" stroke-width="1.1"/><text x="774" y="302.6" text-anchor="end" font-size="7.9" fill="#505050" stroke="#505050" stroke-width="0.1">Legend</text><circle cx="779" cy="300" r="2.9" fill="none" stroke="#444" stroke-width="1.1"/><path d="M779.8 298.7l-1.5 1.3l1.5 1.3" fill="none" stroke="#444" stroke-width="1.1"/><circle cx="700.5" cy="310.6" r="3" fill="#57c17b"/><text x="707.3" y="313.8" font-size="7.7" fill="#606060">75th percentile of resp...</text><circle cx="700.5" cy="324.40000000000003" r="3" fill="#006e8a"/><text x="707.3" y="327.6" font-size="7.7" fill="#606060">99th percentile of resp...</text><circle cx="700.5" cy="338.20000000000005" r="3" fill="#6f87d8"/><text x="707.3" y="341.40000000000003" font-size="7.7" fill="#606060">99.5th percentile of re...</text><line x1="38.7" y1="439" x2="38.7" y2="563" stroke="#e4e4e4"/><line x1="38.7" y1="563" x2="392.5" y2="563" stroke="#e4e4e4"/><line x1="35.2" y1="563.0" x2="38.7" y2="563.0" stroke="#e4e4e4" stroke-width="1"/><text x="32.7" y="565.4" text-anchor="end" font-size="6.9" fill="#77818a">0</text><line x1="35.2" y1="542.35" x2="38.7" y2="542.35" stroke="#e4e4e4" stroke-width="1"/><text x="32.7" y="544.75" text-anchor="end" font-size="6.9" fill="#77818a">10k</text><line x1="35.2" y1="521.7" x2="38.7" y2="521.7" stroke="#e4e4e4" stroke-width="1"/><text x="32.7" y="524.1" text-anchor="end" font-size="6.9" fill="#77818a">20k</text><line x1="35.2" y1="501.05" x2="38.7" y2="501.05" stroke="#e4e4e4" stroke-width="1"/><text x="32.7" y="503.45" text-anchor="end" font-size="6.9" fill="#77818a">30k</text><line x1="35.2" y1="480.4" x2="38.7" y2="480.4" stroke="#e4e4e4" stroke-width="1"/><text x="32.7" y="482.79999999999995" text-anchor="end" font-size="6.9" fill="#77818a">40k</text><line x1="35.2" y1="459.75" x2="38.7" y2="459.75" stroke="#e4e4e4" stroke-width="1"/><text x="32.7" y="462.15" text-anchor="end" font-size="6.9" fill="#77818a">50k</text><line x1="35.2" y1="439.1" x2="38.7" y2="439.1" stroke="#e4e4e4" stroke-width="1"/><text x="32.7" y="441.5" text-anchor="end" font-size="6.9" fill="#77818a">60k</text><rect x="47.4" y="455.29999999999995" width="60.9" height="107.70000000000002" fill="#57c17b" stroke="#45b86e" stroke-width="0.8"/><line x1="77.85" y1="563" x2="77.85" y2="566.5" stroke="#d4d4d4" stroke-width="1"/><text x="77.85" y="574.2" text-anchor="middle" font-size="6.9" fill="#77818a">zip</text><rect x="116.60000000000001" y="455.9" width="60.9" height="107.1" fill="#57c17b" stroke="#45b86e" stroke-width="0.8"/><line x1="147.05" y1="563" x2="147.05" y2="566.5" stroke="#d4d4d4" stroke-width="1"/><text x="147.05" y="574.2" text-anchor="middle" font-size="6.9" fill="#77818a">ping</text><rect x="185.8" y="455.4" width="60.9" height="107.6" fill="#57c17b" stroke="#45b86e" stroke-width="0.8"/><line x1="216.25" y1="563" x2="216.25" y2="566.5" stroke="#d4d4d4" stroke-width="1"/><text x="216.25" y="574.2" text-anchor="middle" font-size="6.9" fill="#77818a">calculate</text><rect x="255.00000000000003" y="509.4" width="60.9" height="53.6" fill="#57c17b" stroke="#45b86e" stroke-width="0.8"/><line x1="285.45000000000005" y1="563" x2="285.45000000000005" y2="566.5" stroke="#d4d4d4" stroke-width="1"/><text x="285.45000000000005" y="574.2" text-anchor="middle" font-size="6.9" fill="#77818a">add_doubles</text><rect x="324.2" y="509.4" width="60.9" height="53.6" fill="#57c17b" stroke="#45b86e" stroke-width="0.8"/><line x1="354.65000000000003" y1="563" x2="354.65000000000003" y2="566.5" stroke="#d4d4d4" stroke-width="1"/><text x="354.65000000000003" y="574.2" text-anchor="middle" font-size="6.9" fill="#77818a">add</text><text x="0" y="0" transform="translate(13.6,499.5) rotate(-90)" text-anchor="middle" font-size="8" fill="#5f6a73" stroke="#5f6a73" stroke-width="0.25">Sum of count</text><text x="215.5" y="585.5" text-anchor="middle" font-size="8.1" fill="#5f6a73" stroke="#5f6a73" stroke-width="0.3">Top 5 method</text><line x1="436.7" y1="439" x2="436.7" y2="563" stroke="#e4e4e4"/><line x1="436.7" y1="563" x2="790.6" y2="563" stroke="#e4e4e4"/><line x1="433.2" y1="563.0" x2="436.7" y2="563.0" stroke="#e4e4e4" stroke-width="1"/><text x="430.7" y="565.4" text-anchor="end" font-size="6.9" fill="#77818a">0</text><line x1="433.2" y1="542.35" x2="436.7" y2="542.35" stroke="#e4e4e4" stroke-width="1"/><text x="430.7" y="544.75" text-anchor="end" font-size="6.9" fill="#77818a">5k</text><line x1="433.2" y1="521.7" x2="436.7" y2="521.7" stroke="#e4e4e4" stroke-width="1"/><text x="430.7" y="524.1" text-anchor="end" font-size="6.9" fill="#77818a">10k</text><line x1="433.2" y1="501.05" x2="436.7" y2="501.05" stroke="#e4e4e4" stroke-width="1"/><text x="430.7" y="503.45" text-anchor="end" font-size="6.9" fill="#77818a">15k</text><line x1="433.2" y1="480.4" x2="436.7" y2="480.4" stroke="#e4e4e4" stroke-width="1"/><text x="430.7" y="482.79999999999995" text-anchor="end" font-size="6.9" fill="#77818a">20k</text><line x1="433.2" y1="459.75" x2="436.7" y2="459.75" stroke="#e4e4e4" stroke-width="1"/><text x="430.7" y="462.15" text-anchor="end" font-size="6.9" fill="#77818a">25k</text><line x1="433.2" y1="439.1" x2="436.7" y2="439.1" stroke="#e4e4e4" stroke-width="1"/><text x="430.7" y="441.5" text-anchor="end" font-size="6.9" fill="#77818a">30k</text><rect x="470.3" y="455.9" width="287.4" height="107.10000000000002" fill="#57c17b" stroke="#45b86e" stroke-width="0.8"/><line x1="614" y1="563" x2="614" y2="566.5" stroke="#d4d4d4" stroke-width="1"/><text x="614" y="574.2" text-anchor="middle" font-size="6.9" fill="#77818a">calculate</text><text x="0" y="0" transform="translate(411.6,499.5) rotate(-90)" text-anchor="middle" font-size="8" fill="#5f6a73" stroke="#5f6a73" stroke-width="0.25">Sum of count</text><text x="614" y="585.5" text-anchor="middle" font-size="8.1" fill="#5f6a73" stroke="#5f6a73" stroke-width="0.3">Top 5 method</text></svg>
<div class="a" style="left:140px;top:249px;width:323px;height:13px;background:#fff;border-top:1px solid #eceeef"></div>
<div class="a" style="left:285.7px;top:249px;width:31px;height:11px;background:#fff;border:1px solid #e9ebec;border-top:none;border-radius:0 0 3px 3px"></div>
<svg class="a" style="left:297.2px;top:252px" width="8" height="5" viewBox="0 0 8 5"><path d="M0.8 4.2L4 1.2L7.2 4.2" fill="none" stroke="#111" stroke-width="1.5"/></svg>
<div class="a" style="left:472px;top:249px;width:323px;height:13px;background:#fff;border-top:1px solid #eceeef"></div>
<div class="a" style="left:618.0px;top:249px;width:31px;height:11px;background:#fff;border:1px solid #e9ebec;border-top:none;border-radius:0 0 3px 3px"></div>
<svg class="a" style="left:629.5px;top:252px" width="8" height="5" viewBox="0 0 8 5"><path d="M0.8 4.2L4 1.2L7.2 4.2" fill="none" stroke="#111" stroke-width="1.5"/></svg>
<div class="a" style="left:7px;top:387px;width:390px;height:14px;background:#fff;border-top:1px solid #eceeef"></div>
<div class="a" style="left:185.7px;top:387px;width:31px;height:12px;background:#fff;border:1px solid #e9ebec;border-top:none;border-radius:0 0 3px 3px"></div>
<svg class="a" style="left:197.2px;top:390px" width="8" height="5" viewBox="0 0 8 5"><path d="M0.8 4.2L4 1.2L7.2 4.2" fill="none" stroke="#111" stroke-width="1.5"/></svg>
<div class="a" style="left:405px;top:387px;width:390px;height:14px;background:#fff;border-top:1px solid #eceeef"></div>
<div class="a" style="left:584.5px;top:387px;width:31px;height:12px;background:#fff;border:1px solid #e9ebec;border-top:none;border-radius:0 0 3px 3px"></div>
<svg class="a" style="left:596px;top:390px" width="8" height="5" viewBox="0 0 8 5"><path d="M0.8 4.2L4 1.2L7.2 4.2" fill="none" stroke="#111" stroke-width="1.5"/></svg>
<div class="a" style="left:7px;top:594px;width:390px;height:13px;background:#fff;border-top:1px solid #eceeef"></div>
<div class="a" style="left:186.5px;top:594px;width:31px;height:11px;background:#fff;border:1px solid #e9ebec;border-top:none;border-radius:0 0 3px 3px"></div>
<svg class="a" style="left:198px;top:597px" width="8" height="5" viewBox="0 0 8 5"><path d="M0.8 4.2L4 1.2L7.2 4.2" fill="none" stroke="#111" stroke-width="1.5"/></svg>
<div class="a" style="left:405px;top:594px;width:390px;height:13px;background:#fff;border-top:1px solid #eceeef"></div>
<div class="a" style="left:584.5px;top:594px;width:31px;height:11px;background:#fff;border:1px solid #e9ebec;border-top:none;border-radius:0 0 3px 3px"></div>
<svg class="a" style="left:596px;top:597px" width="8" height="5" viewBox="0 0 8 5"><path d="M0.8 4.2L4 1.2L7.2 4.2" fill="none" stroke="#111" stroke-width="1.5"/></svg>
<svg class="a" style="left:450px;top:250px" width="10" height="10" viewBox="0 0 10 10"><path d="M5.5 7.2h2.2v-2.7" fill="none" stroke="#333" stroke-width="1.1"/></svg>
</body></html>
